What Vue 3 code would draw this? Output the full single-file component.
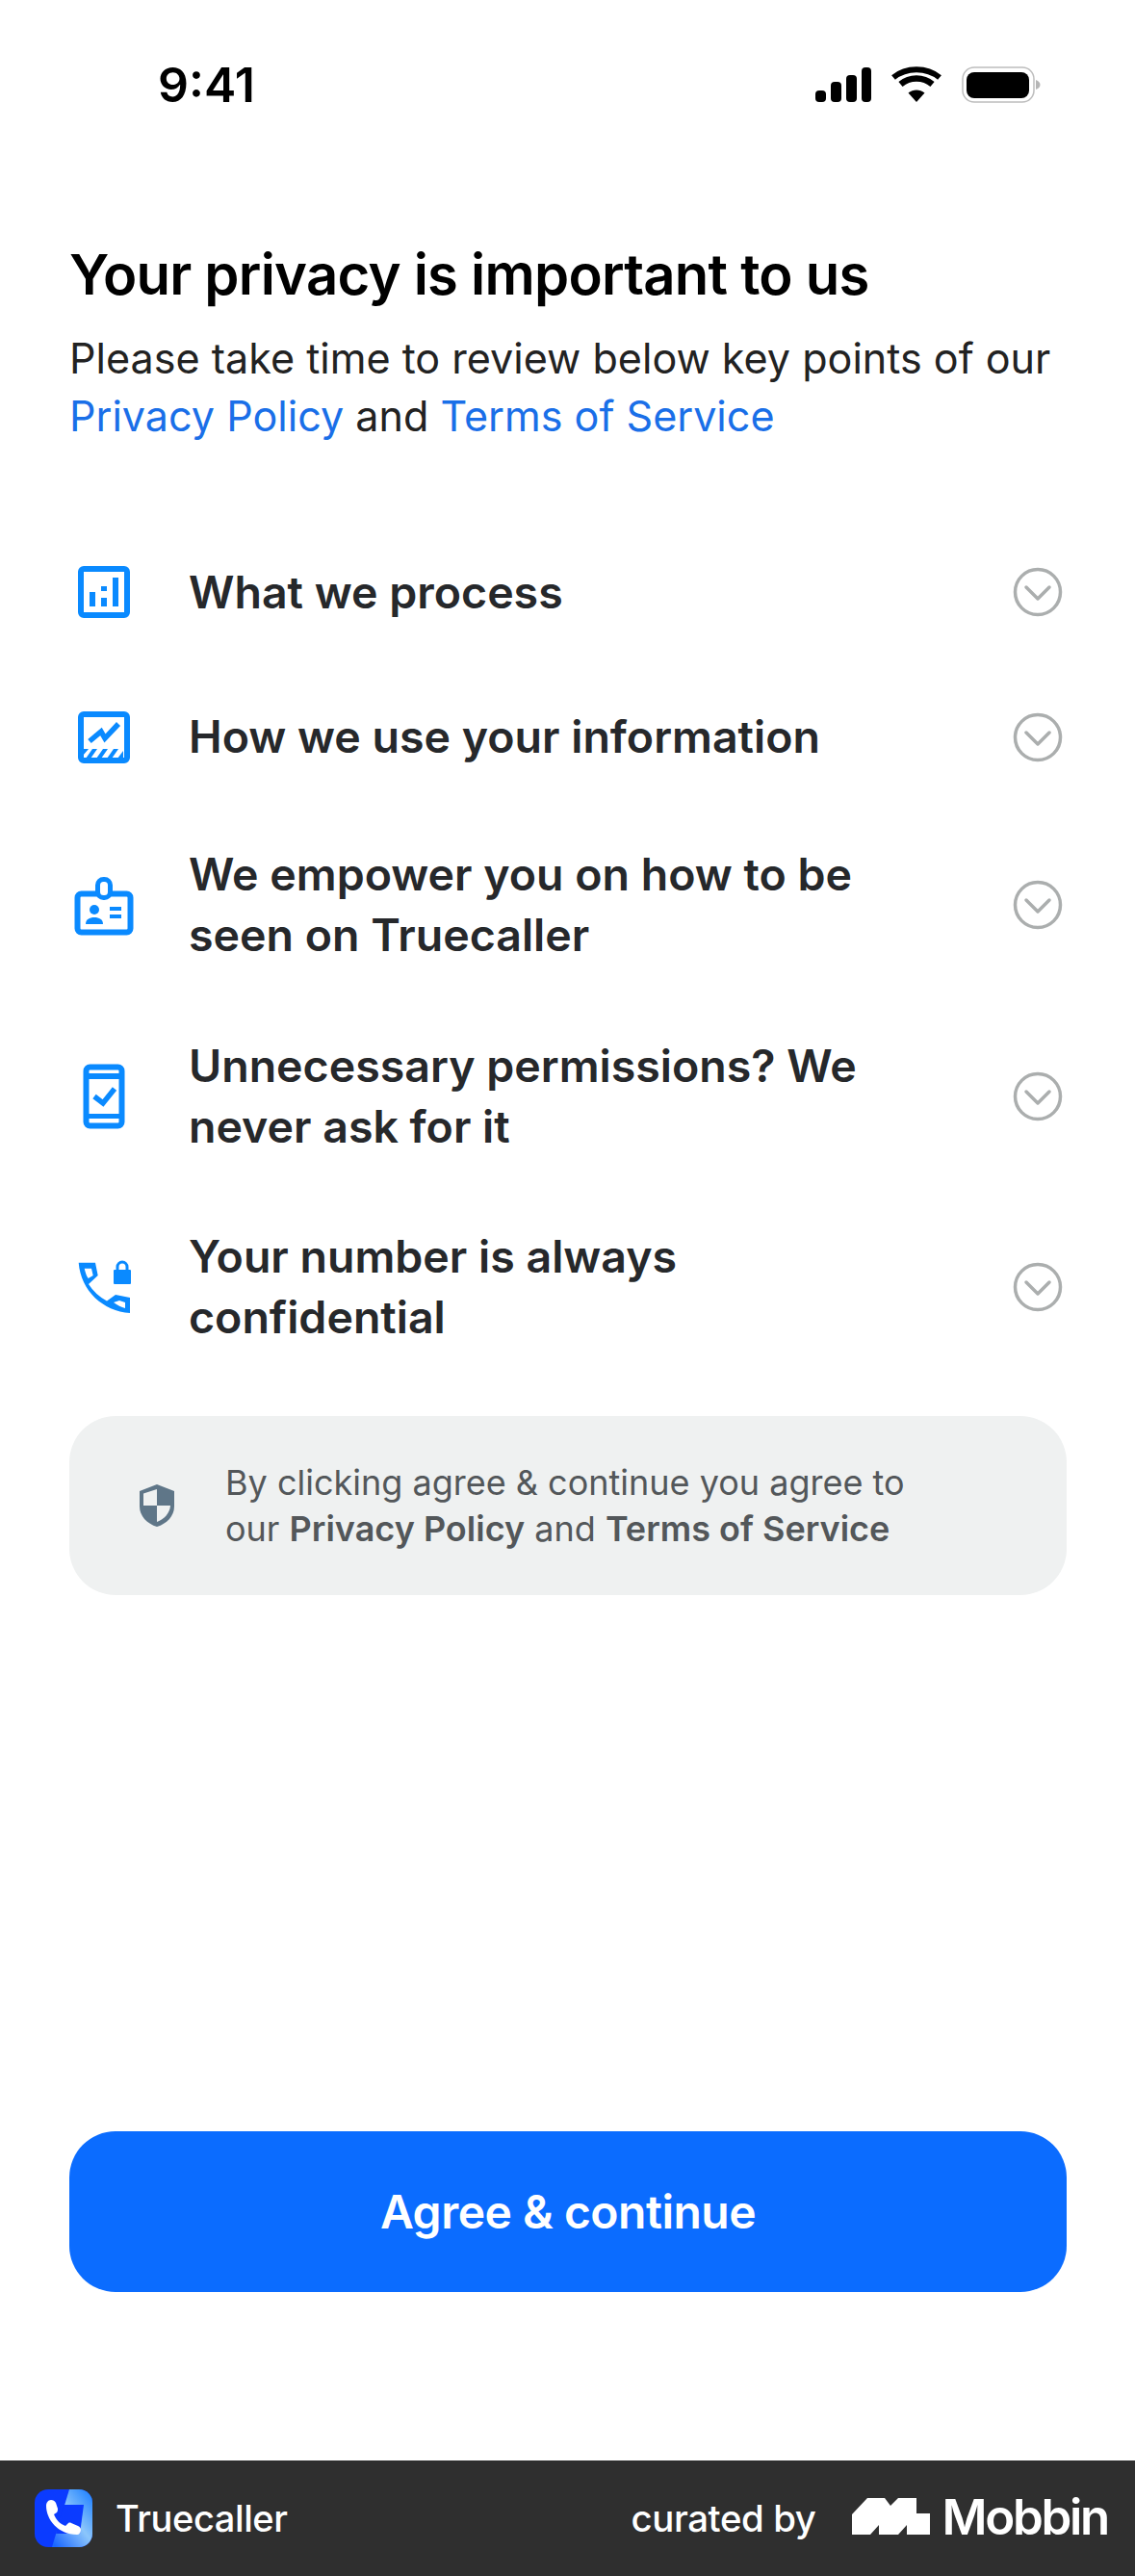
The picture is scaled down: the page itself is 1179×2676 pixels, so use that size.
<script setup>
const items = [
  { id: 'chart', label: 'What we process' },
  { id: 'trend', label: 'How we use your information' },
  { id: 'badge', label: 'We empower you on how to be seen on Truecaller' },
  { id: 'phone', label: 'Unnecessary permissions? We never ask for it' },
  { id: 'call', label: 'Your number is always confidential' }
]
</script>

<template>
  <div class="page">
    <div class="status-bar">
      <span class="time">9:41</span>
      <div class="status-icons">
        <svg width="60" height="38" viewBox="0 0 60 38">
          <rect x="1" y="25" width="11" height="12" rx="4" fill="#000" />
          <rect x="17" y="16" width="11" height="21" rx="4" fill="#000" />
          <rect x="33" y="9" width="11" height="28" rx="4" fill="#000" />
          <rect x="49" y="1" width="10" height="36" rx="4" fill="#000" />
        </svg>
        <svg class="wifi" width="52" height="38" viewBox="0 0 52 38">
          <path d="M26 37 17.500 27.500C22.500 23.500 29.500 23.500 34.500 27.500Z" fill="#000" />
          <path d="M9.500 18.500C19 10.500 33 10.500 42.500 18.500" fill="none" stroke="#000" stroke-width="6.500" />
          <path d="M2 9.500C15.500 -1.500 36.500 -1.500 50 9.500" fill="none" stroke="#000" stroke-width="6" transform="translate(0 2)" />
        </svg>
        <svg class="battery" width="82" height="38" viewBox="0 0 82 38">
          <rect x="1" y="1" width="74" height="36" rx="12" fill="#fff" stroke="#bdbdbd" stroke-width="1.500" />
          <rect x="5" y="6" width="65" height="27" rx="8" fill="#000" />
          <path d="M77 14c3 1 4.500 3 4.500 5s-1.500 4-4.500 5z" fill="#b5b5b5" />
        </svg>
      </div>
    </div>

    <main class="content">
      <h1 class="title">Your privacy is important to us</h1>
      <p class="intro">
        Please take time to review below key points of our
        <a class="link">Privacy Policy</a> and <a class="link">Terms of Service</a>
      </p>

      <ul class="points">
        <li v-for="item in items" :key="item.id" class="point">
          <span class="point-icon">
            <svg v-if="item.id === 'chart'" width="72" height="72" viewBox="0 0 72 72">
              <rect x="12" y="12" width="48" height="48" rx="3" class="line" />
              <path d="M21 36h6v15h-6zM33 30h6v5h-6zM33 42h6v9h-6zM45 21h6v30h-6z" class="solid" />
            </svg>
            <svg v-else-if="item.id === 'trend'" width="72" height="72" viewBox="0 0 72 72">
              <rect x="12" y="12" width="48" height="48" rx="3" class="line" />
              <path d="M21 40 33 30l4 7 14-15" class="thin" />
              <path d="M17 58l7-10h5l-7 10zM28 58l7-10h5l-7 10zM39 58l7-10h5l-7 10zM50 58l6-8v8zM14 55v-7h6z" class="solid" />
            </svg>
            <svg v-else-if="item.id === 'badge'" width="72" height="72" viewBox="0 0 72 72">
              <rect x="8.500" y="24.500" width="55" height="40" rx="4" class="line" />
              <rect x="29.500" y="9.500" width="13" height="19" rx="6" fill="#fff" stroke="#0a8aff" stroke-width="5" />
              <circle cx="26" cy="41" r="5" class="solid" />
              <path d="M17 56c0-5 4-7 9-7s9 2 9 7z" class="solid" />
              <path d="M42 38h12v4H42zM42 46h12v4H42z" class="solid" />
            </svg>
            <svg v-else-if="item.id === 'phone'" width="72" height="72" viewBox="0 0 72 72">
              <rect x="17.500" y="5.500" width="37" height="61" rx="4" class="line" />
              <path d="M18 12h36v6H18zM18 54h36v5H18z" class="solid" />
              <path d="M26 36l9 7 12-15" class="thin" />
            </svg>
            <svg v-else width="72" height="72" viewBox="0 0 72 72">
              <path d="M9.700 10.700H27L29.700 24 20 33Q27 44 39 50.500L48 44 63 47V63C35 61 12 40 9.700 10.700ZM15.700 16.700C16.500 20 17.500 24 19.700 27L24.700 24 23 16.700ZM46 52 52 50 58 52V58C54 57 50 55 46 52Z" fill="#0a8aff" fill-rule="evenodd" />
              <rect x="46" y="18" width="18" height="15" rx="1" class="solid" />
              <path d="M50 19v-4a5 5 0 0 1 10 0v4" fill="none" stroke="#0a8aff" stroke-width="3" />
            </svg>
          </span>
          <span class="point-label">{{ item.label }}</span>
          <svg class="chevron" width="56" height="56" viewBox="0 0 56 56">
            <circle cx="28" cy="28" r="23.500" fill="none" stroke="#abaeae" stroke-width="3.500" />
            <path d="M16 23l12 12 12-12" fill="none" stroke="#abaeae" stroke-width="3.500" stroke-linecap="round" stroke-linejoin="round" />
          </svg>
        </li>
      </ul>

      <div class="note">
        <svg class="shield" width="38" height="46" viewBox="0 0 38 46">
          <path d="M19 1 37 8v16c0 10-8 18-18 21C9 42 1 34 1 24V8z" fill="#5f7688" />
          <path d="M19 6v17H5V10.500zM19 23h14c-.5 8-6.500 14-14 17z" fill="#eff1f1" />
        </svg>
        <p class="note-text">
          By clicking agree &amp; continue you agree to<br />
          our <b>Privacy Policy</b> and <b>Terms of Service</b>
        </p>
      </div>

      <div class="spacer"></div>
      <button class="agree">Agree &amp; continue</button>
    </main>

    <footer class="footer">
      <div class="brand">
        <svg width="60" height="60" viewBox="0 0 60 60">
          <defs>
            <linearGradient id="tcGlow" x1="0.1" y1="1" x2="0.9" y2="0.1">
              <stop offset="0" stop-color="#1a66ff" />
              <stop offset="0.55" stop-color="#8cc6fb" />
              <stop offset="1" stop-color="#2f8bff" />
            </linearGradient>
          </defs>
          <rect width="60" height="60" rx="14" fill="#0b3bff" />
          <path d="M36 0h10a14 14 0 0 1 14 14v32a14 14 0 0 1-14 14H18z" fill="url(#tcGlow)" />
          <path d="M30 16h21l-4 30H22z" fill="#0b3bff" />
          <path d="M17 11c-3 0-5 3-5 6 0 14 12 30 32 30 2 0 4-2 4-5 0-2-1-3-3-4l-7-3c-2-1-3 0-4 1l-2 2c-6-2-10-7-12-12l3-2c1-1 1-3 1-4l-2-6c-1-2-3-3-5-3z" fill="#fff" />
        </svg>
        <span class="brand-name">Truecaller</span>
      </div>
      <div class="curated">
        <span class="curated-by">curated by</span>
        <svg class="mobbin-mark" width="82" height="38" viewBox="0 0 82 38">
          <path d="M0 38V17L16 0H34L40 8 48 0H67V16H81V38H57V28L48 38H28V28L19 38Z" fill="#fff" />
        </svg>
        <span class="mobbin">Mobbin</span>
      </div>
    </footer>
  </div>
</template>

<style>
html,
body {
  margin: 0;
  background: #fff;
}
</style>

<style scoped>
.page {
  width: 1179px;
  height: 2676px;
  display: flex;
  flex-direction: column;
  font-family: Inter, "Liberation Sans", sans-serif;
  background: #fff;
}
.status-bar {
  height: 176px;
  flex: none;
  display: flex;
  justify-content: space-between;
  align-items: center;
  padding: 0 98px 0 164px;
  box-sizing: border-box;
}
.time {
  font-size: 50px;
  font-weight: 600;
  color: #000;
  line-height: 40px;
}
.status-icons {
  display: flex;
  align-items: center;
}
.status-icons svg {
  display: block;
}
.wifi {
  margin-left: 20px;
}
.battery {
  margin-left: 21px;
}
.content {
  flex: 1;
  display: flex;
  flex-direction: column;
  padding: 74px 71px 175px 72px;
}
.title {
  margin: 0;
  font-size: 58px;
  line-height: 70px;
  font-weight: 600;
  color: #000;
  letter-spacing: -0.750px;
}
.intro {
  margin: 22px 0 0;
  font-size: 43.100px;
  line-height: 60px;
  color: #222;
}
.link {
  color: #1a6fe8;
}
.points {
  list-style: none;
  margin: 114px 0 0;
  padding: 0;
  display: flex;
  flex-direction: column;
  gap: 72.500px;
}
.point {
  display: flex;
  align-items: center;
  min-height: 78px;
}
.point-icon {
  width: 72px;
  height: 72px;
  flex: none;
  margin-right: 52px;
}
.point-icon svg {
  display: block;
}
.line {
  fill: none;
  stroke: #0a8aff;
  stroke-width: 6;
}
.solid {
  fill: #0a8aff;
}
.thin {
  fill: none;
  stroke: #0a8aff;
  stroke-width: 5.500;
}
.point-label {
  flex: 1;
  max-width: 760px;
  font-size: 46.500px;
  line-height: 63px;
  font-weight: 600;
  color: #26282b;
}
.chevron {
  margin-left: auto;
  margin-right: 2px;
}
.note {
  margin-top: 71px;
  height: 186px;
  box-sizing: border-box;
  display: flex;
  align-items: center;
  padding-left: 72px;
  border-radius: 48px;
  background: #eff1f1;
}
.shield {
  flex: none;
}
.note-text {
  margin: 0 0 0 52px;
  font-size: 36px;
  line-height: 48px;
  color: #53575a;
}
.note-text b {
  font-weight: 600;
}
.spacer {
  flex: 1;
}
.agree {
  height: 167px;
  border: none;
  border-radius: 48px;
  background: #0b6cff;
  color: #fff;
  font-family: inherit;
  font-size: 48px;
  font-weight: 600;
  letter-spacing: -0.5px;
}
.footer {
  height: 120px;
  flex: none;
  display: flex;
  justify-content: space-between;
  align-items: center;
  padding: 0 28px 0 36px;
  background: #2f2f2f;
  color: #fff;
}
.brand,
.curated {
  display: flex;
  align-items: center;
}
.brand-name {
  margin-left: 24px;
  font-size: 38px;
  font-weight: 500;
  letter-spacing: -0.4px;
}
.curated-by {
  font-size: 38.400px;
  font-weight: 500;
  letter-spacing: -0.4px;
}
.mobbin-mark {
  margin-left: 37px;
  margin-top: -4px;
}
.mobbin {
  margin-left: 12px;
  margin-top: -4px;
  font-size: 51px;
  font-weight: 600;
  letter-spacing: -2.300px;
}
</style>
